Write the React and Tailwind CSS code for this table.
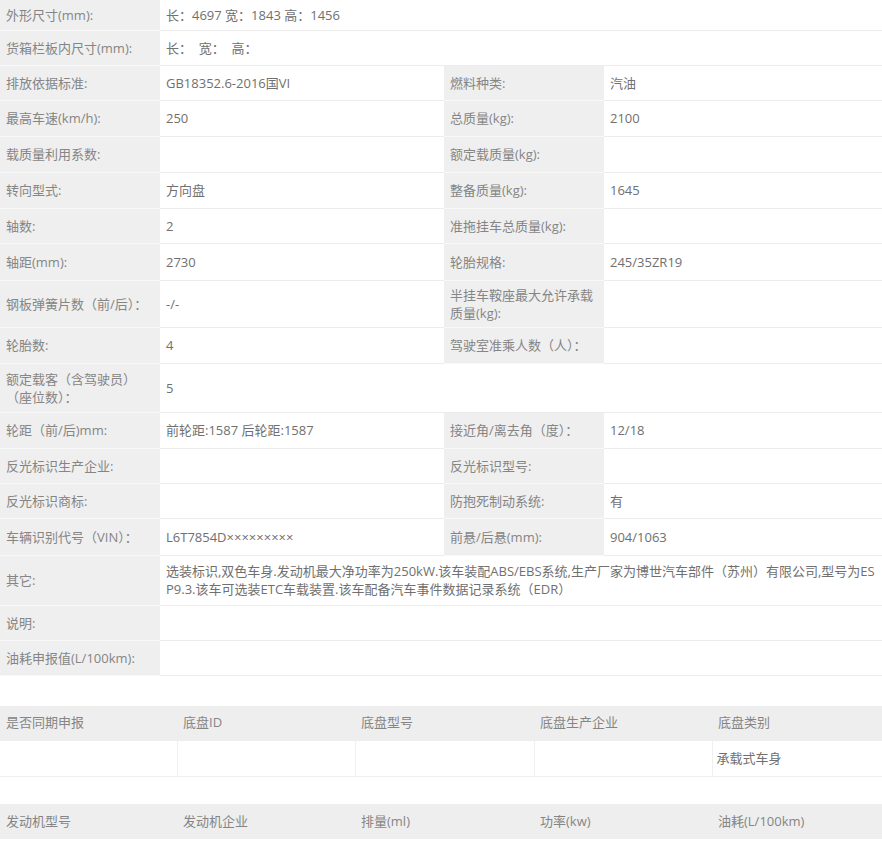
import React from 'react';

const font = { fontFamily: '"Open Sans", "Noto Sans CJK SC", sans-serif' };

// [label, value, label2, value2, height]; label2 === null means value spans the row
const rows = [
    ['外形尺寸(mm):', '长：4697 宽：1843 高：1456', null, null, 'h-[30px]'],
    ['货箱栏板内尺寸(mm):', '长：  宽：  高：', null, null, 'h-[35px]'],
    ['排放依据标准:', 'GB18352.6-2016国VI', '燃料种类:', '汽油', 'h-[35px]'],
    ['最高车速(km/h):', '250', '总质量(kg):', '2100', 'h-[36px]'],
    ['载质量利用系数:', '', '额定载质量(kg):', '', 'h-[36px]'],
    ['转向型式:', '方向盘', '整备质量(kg):', '1645', 'h-[36px]'],
    ['轴数:', '2', '准拖挂车总质量(kg):', '', 'h-[35px]'],
    ['轴距(mm):', '2730', '轮胎规格:', '245/35ZR19', 'h-[37px]'],
    ['钢板弹簧片数（前/后）：', '-/-', '半挂车鞍座最大允许承载质量(kg):', '', 'h-[47px]'],
    ['轮胎数:', '4', '驾驶室准乘人数（人）：', '', 'h-[36px]'],
    ['额定载客（含驾驶员）（座位数）：', '5', null, null, 'h-[49px]'],
    ['轮距（前/后)mm:', '前轮距:1587 后轮距:1587', '接近角/离去角（度）：', '12/18', 'h-[36px]'],
    ['反光标识生产企业:', '', '反光标识型号:', '', 'h-[35px]'],
    ['反光标识商标:', '', '防抱死制动系统:', '有', 'h-[35px]'],
    ['车辆识别代号（VIN）：', 'L6T7854D×××××××××', '前悬/后悬(mm):', '904/1063', 'h-[37px]'],
    ['其它:', '选装标识,双色车身.发动机最大净功率为250kW.该车装配ABS/EBS系统,生产厂家为博世汽车部件（苏州）有限公司,型号为ESP9.3.该车可选装ETC车载装置.该车配备汽车事件数据记录系统（EDR）', null, null, 'h-[50px]'],
    ['说明:', '', null, null, 'h-[35px]'],
    ['油耗申报值(L/100km):', '', null, null, 'h-[35px]'],
];

const labelCls = 'bg-[#efefef] text-[#858585] border-b border-[#f8f8f8] px-[6px] align-middle leading-[18px]';
const valueCls = 'bg-white text-[#707070] border-b border-[#ececec] pl-[6px] align-middle leading-[18px]';

function SubTable({ head, body }) {
    return (
        <table className="table-fixed border-collapse w-[890px] text-[13px]">
            <colgroup>
                <col className="w-[177px]" />
                <col className="w-[178px]" />
                <col className="w-[179px]" />
                <col className="w-[178px]" />
                <col className="w-[178px]" />
            </colgroup>
            <tbody>
                <tr className="h-[35px] bg-[#eeeeee]">
                    {head.map((h, i) => (
                        <td key={i} className="text-[#858585] px-[6px] align-middle">{h}</td>
                    ))}
                </tr>
                {body && (
                    <tr className="h-[36px] bg-white">
                        {body.map((b, i) => (
                            <td key={i} className="text-[#707070] px-[4px] align-middle border-b border-r border-[#f0f0f0]">{b}</td>
                        ))}
                    </tr>
                )}
            </tbody>
        </table>
    );
}

export default function App() {
    return (
        <div className="w-[882px] h-[842px] overflow-hidden bg-white" style={font}>
            <table className="table-fixed border-collapse w-[882px] text-[13px]">
                <colgroup>
                    <col className="w-[160px]" />
                    <col className="w-[284px]" />
                    <col className="w-[160px]" />
                    <col />
                </colgroup>
                <tbody>
                    {rows.map(([l, v, l2, v2, h], i) => (
                        <tr key={i} className={h}>
                            <td className={labelCls}>{l}</td>
                            {l2 === null ? (
                                <td colSpan={3} className={`${valueCls} break-all whitespace-pre-wrap`}>{v}</td>
                            ) : (
                                <>
                                    <td className={valueCls}>{v}</td>
                                    <td className={labelCls}>{l2}</td>
                                    <td className={valueCls}>{v2}</td>
                                </>
                            )}
                        </tr>
                    ))}
                </tbody>
            </table>

            <div className="mt-[30px]">
                <SubTable
                    head={['是否同期申报', '底盘ID', '底盘型号', '底盘生产企业', '底盘类别']}
                    body={['', '', '', '', '承载式车身']}
                />
            </div>

            <div className="mt-[27px]">
                <SubTable head={['发动机型号', '发动机企业', '排量(ml)', '功率(kw)', '油耗(L/100km)']} />
            </div>
        </div>
    );
}
